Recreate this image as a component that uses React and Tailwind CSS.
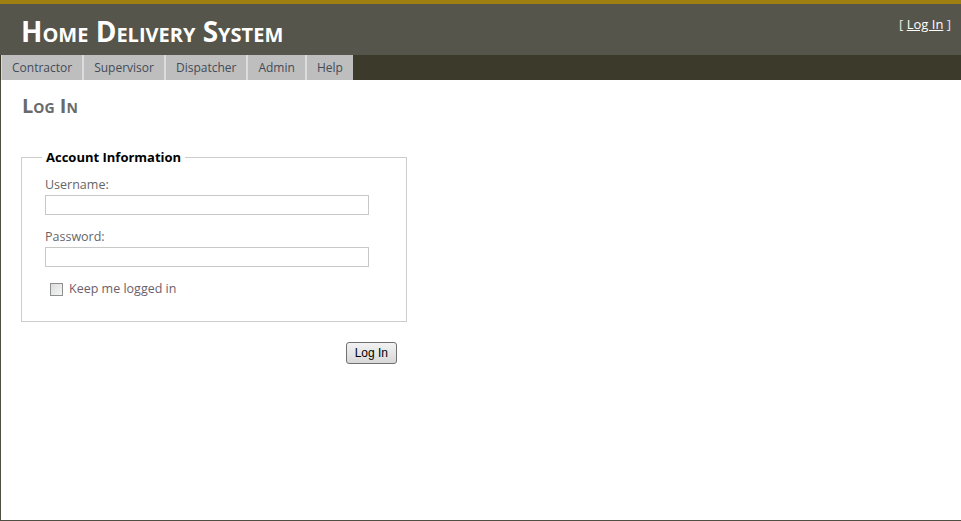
const tabs = ['Contractor', 'Supervisor', 'Dispatcher', 'Admin', 'Help'];

const App = () => {
    return (
        <div className="w-[961px] h-[521px] flex flex-col bg-white font-['Open_Sans',sans-serif] overflow-hidden">
            {/* Header */}
            <header className="h-[55px] shrink-0 border-t-4 border-[#a07f12] bg-[#56554b] flex justify-between">
                <h1 className="pl-[21px] pt-[11px] text-[28px] leading-[32px] font-bold text-white [font-variant:small-caps] tracking-[0px]">
                    Home Delivery System
                </h1>
                <div className="pr-[10px] pt-[11px] text-[13px] leading-[18px] text-[#e8e8e8]">
                    [ <a href="#" className="text-white underline">Log In</a> ]
                </div>
            </header>

            {/* Tabs */}
            <nav className="h-[25px] shrink-0 bg-[#3b3a2b] flex pl-[1px]">
                {tabs.map((t) => (
                    <a
                        key={t}
                        href="#"
                        className="h-full border-l-2 border-[#dcdcdc] first:border-l first:border-[#d8d8d8] bg-[#bebebe] px-[10px] flex items-center text-[12px] text-[#434b57]"
                    >
                        {t}
                    </a>
                ))}
            </nav>

            {/* Main */}
            <main className="flex-1 border-l border-b border-[#4f4f44] pl-[20px] pt-[14px]">
                <h2 className="pl-[1px] text-[20px] leading-[24px] font-bold text-[#6a6a6a] [font-variant:small-caps]">Log In</h2>

                <div className="w-[386px] mt-[30px]">
                    <fieldset className="border border-[#cccccc] pl-[23px] pb-[23px] pt-0">
                        <legend className="px-[4px] -ml-[3px] text-[13px] font-bold text-black leading-[18px]">
                            Account Information
                        </legend>
                        <div className="flex flex-col text-[12.5px] text-[#666666]">
                            <label className="leading-[18px] mt-[10px]">Username:</label>
                            <input type="text" className="w-[324px] h-[20px] border border-[#c8c8c8] mt-[1px]" />
                            <label className="leading-[18px] mt-[13px]">Password:</label>
                            <input type="password" className="w-[324px] h-[20px] border border-[#c8c8c8] mt-[1px]" />
                            <div className="flex items-center mt-[13px] pl-[5px] gap-[6px]">
                                <span className="w-[13px] h-[13px] border border-[#8e8f8f] bg-gradient-to-br from-[#dcdcdc] to-[#f6f6f6]" />
                                <span className="text-[#6d5e6d] leading-[18px]">Keep me logged in</span>
                            </div>
                        </div>
                    </fieldset>
                    <div className="flex justify-end pr-[10px] mt-[20px]">
                        <button className="h-[22px] px-[8px] rounded-[3px] border border-[#707070] bg-gradient-to-b from-[#f2f2f2] to-[#d8d8d8] text-[12px] leading-[18px] text-black font-['Liberation_Sans',sans-serif]">
                            Log In
                        </button>
                    </div>
                </div>
            </main>
        </div>
    );
};

export default App;
